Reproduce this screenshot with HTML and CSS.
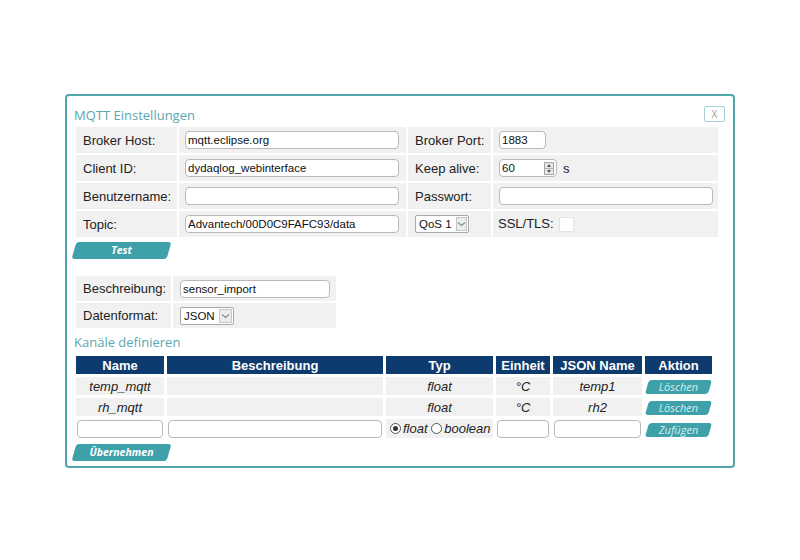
FILE: index.html
```html
<!DOCTYPE html>
<html>
<head>
<meta charset="utf-8">
<link rel="stylesheet" href="styles.css">
</head>
<body>
<div class="dialog">
  <div class="head">
    <div class="title">MQTT Einstellungen</div>
    <button class="close">X</button>
  </div>
  <table class="form form1">
    <colgroup><col class="c1"><col class="c2"><col class="c3"><col class="c4"></colgroup>
    <tr>
      <td class="lbl">Broker Host:</td>
      <td class="fld"><input class="txt wide" value="mqtt.eclipse.org"></td>
      <td class="lbl">Broker Port:</td>
      <td class="fld2"><input class="txt port" value="1883"></td>
    </tr>
    <tr>
      <td class="lbl">Client ID:</td>
      <td class="fld"><input class="txt wide" value="dydaqlog_webinterface"></td>
      <td class="lbl">Keep alive:</td>
      <td class="fld2"><span class="num"><span class="numval">60</span><span class="spin"><span class="up"></span><span class="down"></span></span></span><span class="unit">s</span></td>
    </tr>
    <tr>
      <td class="lbl">Benutzername:</td>
      <td class="fld"><input class="txt wide" value=""></td>
      <td class="lbl">Passwort:</td>
      <td class="fld2"><input class="txt wide" value=""></td>
    </tr>
    <tr>
      <td class="lbl">Topic:</td>
      <td class="fld"><input class="txt wide" value="Advantech/00D0C9FAFC93/data"></td>
      <td class="selcell"><span class="sel qos">QoS 1<span class="arr"><svg width="9" height="6" viewBox="0 0 9 6"><path d="M1 1.5 L4.5 4.5 L8 1.5" fill="none" stroke="#8a8a8a" stroke-width="1.1"/></svg></span></span></td>
      <td class="lbl2">SSL/TLS: <span class="chk"></span></td>
    </tr>
  </table>
  <div class="btnrow"><span class="sbtn big">Test</span></div>

  <table class="form form2">
    <colgroup><col class="d1"><col class="d2"></colgroup>
    <tr>
      <td class="lbl">Beschreibung:</td>
      <td class="fld3"><input class="txt desc" value="sensor_import"></td>
    </tr>
    <tr>
      <td class="lbl">Datenformat:</td>
      <td class="fld3"><span class="sel json">JSON<span class="arr"><svg width="9" height="6" viewBox="0 0 9 6"><path d="M1 1.5 L4.5 4.5 L8 1.5" fill="none" stroke="#8a8a8a" stroke-width="1.1"/></svg></span></span></td>
    </tr>
  </table>

  <div class="subtitle">Kanäle definieren</div>
  <table class="chan">
    <colgroup><col class="k1"><col class="k2"><col class="k3"><col class="k4"><col class="k5"><col class="k6"></colgroup>
    <tr class="hdr">
      <th>Name</th><th>Beschreibung</th><th>Typ</th><th>Einheit</th><th>JSON Name</th><th>Aktion</th>
    </tr>
    <tr class="row">
      <td>temp_mqtt</td><td></td><td>float</td><td>°C</td><td>temp1</td><td class="act"><span class="sbtn small">Löschen</span></td>
    </tr>
    <tr class="row">
      <td>rh_mqtt</td><td></td><td>float</td><td>°C</td><td>rh2</td><td class="act"><span class="sbtn small">Löschen</span></td>
    </tr>
    <tr class="inrow">
      <td><input class="txt cin"></td>
      <td><input class="txt cin"></td>
      <td class="radios"><span class="radio on"></span>float <span class="radio"></span>boolean</td>
      <td><input class="txt cin"></td>
      <td><input class="txt cin"></td>
      <td class="act"><span class="sbtn small">Zufügen</span></td>
    </tr>
  </table>
  <div class="btnrow"><span class="sbtn big">Übernehmen</span></div>
</div>
</body>
</html>
```

FILE: styles.css
```css
html, body {
  margin: 0;
  padding: 0;
  background: #ffffff;
}
body {
  padding: 94px 0 0 65px;
  font-family: "Liberation Sans", Arial, sans-serif;
  color: #222;
}
.dialog {
  box-sizing: border-box;
  width: 670px;
  border: 2px solid #4fa6ad;
  border-radius: 4px;
  padding: 0 7px 7px 7px;
  background: #fff;
}
.head {
  display: flex;
  justify-content: space-between;
  align-items: flex-start;
  height: 19px;
  padding-top: 10px;
}
.title {
  font-family: "Open Sans", sans-serif;
  font-size: 13px;
  line-height: 19px;
  color: #5aa7b0;
}
.close {
  box-sizing: border-box;
  width: 21px;
  height: 16px;
  margin-right: 1px;
  padding: 0;
  border: 1px solid #a7cfd3;
  border-radius: 2px;
  background: #fff;
  color: #9a9a9a;
  font-family: "Open Sans", sans-serif;
  font-size: 10px;
  line-height: 14px;
}
table.form {
  border-collapse: separate;
  border-spacing: 2px;
  table-layout: fixed;
}
.form1 { width: 646px; }
.form1 col.c1 { width: 101px; }
.form1 col.c2 { width: 227px; }
.form1 col.c3 { width: 83px; }
.form1 col.c4 { width: 225px; }
.form td {
  background: #f1f1f1;
  height: 26px;
  padding: 0;
  font-size: 13px;
  vertical-align: middle;
  white-space: nowrap;
}
.form td.lbl { padding-left: 7px; }
.form td.lbl2 { padding-left: 5px; }
.form td.fld { padding-left: 6px; }
.form td.fld2 { padding-left: 6px; }
.form td.fld3 { padding-left: 7px; }
.form td.selcell { padding-left: 7px; }
.txt {
  box-sizing: border-box;
  height: 18px;
  border: 1px solid #b9b9b9;
  border-radius: 4px;
  padding: 0 2px;
  font-family: "Liberation Sans", Arial, sans-serif;
  font-size: 11.5px;
  color: #111;
  background: #fff;
  vertical-align: middle;
  outline: none;
}
.txt.wide { width: 214px; }
.txt.port { width: 47px; }
.txt.desc { width: 150px; }
.num {
  display: inline-flex;
  align-items: center;
  box-sizing: border-box;
  width: 58px;
  height: 18px;
  border: 1px solid #b9b9b9;
  border-radius: 4px;
  background: #fff;
  vertical-align: middle;
  padding-left: 2px;
  font-size: 11.5px;
  color: #111;
}
.numval { flex: 1; }
.spin {
  display: flex;
  flex-direction: column;
  box-sizing: border-box;
  width: 10px;
  height: 13px;
  margin-right: 2px;
  border: 1px solid #a5a5a5;
  background: #e8e8e8;
}
.spin .up, .spin .down {
  flex: 1;
  position: relative;
}
.spin .up { border-bottom: 1px solid #b5b5b5; }
.spin .up::after {
  content: "";
  position: absolute;
  left: 2px; top: 1px;
  border-left: 2px solid transparent;
  border-right: 2px solid transparent;
  border-bottom: 3px solid #555;
}
.spin .down::after {
  content: "";
  position: absolute;
  left: 2px; top: 1px;
  border-left: 2px solid transparent;
  border-right: 2px solid transparent;
  border-top: 3px solid #555;
}
.unit {
  margin-left: 6px;
  vertical-align: middle;
}
.sel {
  display: inline-flex;
  align-items: center;
  box-sizing: border-box;
  height: 18px;
  border: 1px solid #a9a9a9;
  border-radius: 2px;
  background: #fff;
  padding-left: 3px;
  font-size: 11.5px;
  color: #111;
  vertical-align: middle;
}
.sel .arr {
  display: inline-flex;
  align-items: center;
  justify-content: center;
  box-sizing: border-box;
  width: 13px;
  height: 14px;
  margin-left: 4px;
  margin-right: 1px;
  border: 1px solid #c4c4c4;
  background: #ececec;
}
.qos { width: 54px; }
.json { width: 54px; }
.chk {
  display: inline-block;
  box-sizing: border-box;
  width: 15px;
  height: 15px;
  margin-left: 2px;
  background: #fff;
  border: 1px solid #e4e4e4;
  vertical-align: middle;
}
.btnrow {
  height: 17px;
  margin-top: 1px;
  margin-left: -2px;
}
.sbtn {
  position: relative;
  display: inline-block;
  text-align: center;
  color: #fff;
  font-family: "Open Sans", sans-serif;
  font-style: italic;
  z-index: 0;
}
.sbtn::before {
  content: "";
  position: absolute;
  inset: 0;
  background: #3ea1a9;
  border-radius: 3px;
  transform: skewX(-16deg);
  z-index: -1;
}
.sbtn.big {
  width: 95px;
  height: 17px;
  margin-left: 2px;
  line-height: 17px;
  font-size: 10.5px;
  font-weight: 700;
}
.sbtn.small {
  width: 63px;
  height: 14px;
  line-height: 14px;
  font-size: 11px;
  color: #d6eef0;
  margin-left: 2px;
}
.form2 {
  width: 264px;
  margin-top: 17px;
}
.form2 col.d1 { width: 95px; }
.form2 col.d2 { width: 163px; }
.form2 td { height: 25px; }
.subtitle {
  font-family: "Open Sans", sans-serif;
  font-size: 13px;
  line-height: 19px;
  height: 19px;
  margin-top: 3px;
  color: #5aa7b0;
}
table.chan {
  border-collapse: separate;
  border-spacing: 3px;
  table-layout: fixed;
  width: 642px;
  margin-top: 1px;
  margin-left: -1px;
}
.chan col.k1 { width: 88px; }
.chan col.k2 { width: 216px; }
.chan col.k3 { width: 107px; }
.chan col.k4 { width: 54px; }
.chan col.k5 { width: 89px; }
.chan col.k6 { width: 67px; }
.chan th {
  background: #0d3b6e;
  color: #fff;
  font-weight: 700;
  font-size: 13px;
  height: 18px;
  padding: 0;
  text-align: center;
}
.chan tr.row td {
  background: #f1f1f1;
  height: 18px;
  padding: 0;
  font-size: 13px;
  font-style: italic;
  text-align: center;
  color: #222;
}
.chan td.act {
  background: #fff !important;
  text-align: left !important;
  padding: 0;
}
.chan tr.inrow td {
  height: 19px;
  padding: 0;
  background: #fff;
}
.chan tr.inrow td.radios {
  background: #f1f1f1;
  font-size: 13px;
  font-style: italic;
  white-space: nowrap;
  padding-left: 4px;
}
.txt.cin {
  display: block;
  width: calc(100% - 2px);
  height: 18px;
  margin-left: 1px;
}
.radio {
  display: inline-block;
  box-sizing: border-box;
  width: 11px;
  height: 11px;
  margin-right: 2px;
  border: 1px solid #555;
  border-radius: 50%;
  background: #fff;
  vertical-align: -1px;
  position: relative;
}
.radio.on::after {
  content: "";
  position: absolute;
  left: 2px; top: 2px;
  width: 5px; height: 5px;
  border-radius: 50%;
  background: #333;
}
```
